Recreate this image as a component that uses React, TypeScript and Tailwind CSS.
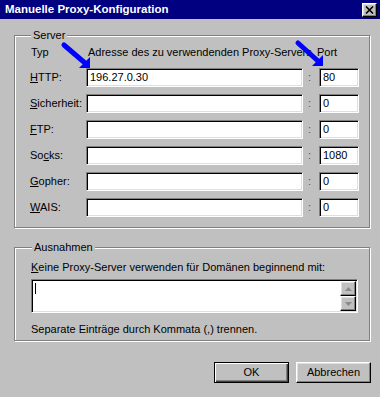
import React from "react";

const sunken =
  "border border-t-[#808080] border-l-[#808080] border-r-white border-b-white shadow-[inset_1px_1px_0_#000,inset_-1px_-1px_0_#dfdfdf] bg-white";
const raised =
  "border border-t-white border-l-white border-r-black border-b-black shadow-[inset_-1px_-1px_0_#808080,inset_1px_1px_0_#dfdfdf] bg-[#c0c0c0]";
const groupBox =
  "border border-[#808080] shadow-[1px_1px_0_#fff,inset_1px_1px_0_#fff]";

type Row = { pre: string; key: string; post: string; host: string; port: string };

const rows: Row[] = [
  { pre: "", key: "H", post: "TTP:", host: "196.27.0.30", port: "80" },
  { pre: "", key: "S", post: "icherheit:", host: "", port: "0" },
  { pre: "", key: "F", post: "TP:", host: "", port: "0" },
  { pre: "So", key: "c", post: "ks:", host: "", port: "1080" },
  { pre: "", key: "G", post: "opher:", host: "", port: "0" },
  { pre: "", key: "W", post: "AIS:", host: "", port: "0" },
];

function Field({ value, className }: { value: string; className: string }) {
  return (
    <div className={`${sunken} ${className} h-[19px] flex items-center pl-[3px] text-black`}>
      {value}
    </div>
  );
}

function Arrow({ x1, y1, tx, ty }: { x1: number; y1: number; tx: number; ty: number }) {
  return (
    <g>
      <line x1={x1} y1={y1} x2={tx - 5} y2={ty - 5} stroke="#0000ff" strokeWidth={5} strokeLinecap="round" />
      <polygon points={`${tx},${ty - 11} ${tx},${ty} ${tx - 11},${ty}`} fill="#0000ff" />
    </g>
  );
}

export default function App() {
  return (
    <div
      className="relative w-[380px] h-[397px] bg-[#c0c0c0] overflow-hidden text-[11px] leading-[13px] text-black"
      style={{ fontFamily: '"Liberation Sans", Arial, sans-serif' }}
    >
      {/* title bar */}
      <div className="h-[19px] bg-[#000080] flex items-center justify-between pl-[5px] pr-[3px]">
        <span className="text-white font-bold text-[11.5px]">Manuelle Proxy-Konfiguration</span>
        <div className={`${raised} w-[15px] h-[14px] flex items-center justify-center`}>
          <svg width="9" height="8" viewBox="0 0 9 8">
            <path d="M1 0.5 L8 7.5 M8 0.5 L1 7.5" stroke="#000" strokeWidth="1.6" />
          </svg>
        </div>
      </div>

      {/* Server */}
      <fieldset className={`${groupBox} ml-[14px] mt-[10px] w-[356px] pl-[15px] pt-[4px] pb-[10px]`}>
        <legend className="ml-[1px] px-[2px] bg-[#c0c0c0]">Server</legend>
        <div className="grid grid-cols-[56px_217px_16px_40px] items-center">
          <span className="pl-[1px]">Typ</span>
          <span className="pl-[2px] whitespace-nowrap">Adresse des zu verwendenden Proxy-Servers</span>
          <span />
          <span className="-ml-[2px]">Port</span>
        </div>
        <div className="mt-[9px] grid grid-cols-[56px_217px_16px_40px] gap-y-[7px] items-center">
          {rows.map((r) => (
            <React.Fragment key={r.post}>
              <span>
                {r.pre}
                <span className="underline">{r.key}</span>
                {r.post}
              </span>
              <Field value={r.host} className="w-[217px]" />
              <span className="text-center pr-[3px] text-[#555]">:</span>
              <Field value={r.port} className="w-[40px]" />
            </React.Fragment>
          ))}
        </div>
      </fieldset>

      {/* Ausnahmen */}
      <fieldset className={`${groupBox} ml-[14px] mt-[13px] w-[356px] pl-[16px] pt-[7px] pb-[4px]`}>
        <legend className="ml-[1px] px-[2px] bg-[#c0c0c0]">Ausnahmen</legend>
        <div>
          <span className="underline">K</span>eine Proxy-Server verwenden für Domänen beginnend mit:
        </div>
        <div className={`${sunken} mt-[5px] w-[327px] h-[34px] flex`}>
          <div className="flex-1 pl-[3px] pt-[3px]">
            <div className="w-[1px] h-[11px] bg-black" />
          </div>
          <div className="w-[16px] flex flex-col mr-[1px] my-[1px]">
            <div className={`${raised} flex-1 flex items-center justify-center`}>
              <svg width="7" height="4" viewBox="0 0 7 4">
                <path d="M3.5 0 L7 4 L0 4 Z" fill="#8a8a8a" />
              </svg>
            </div>
            <div className={`${raised} flex-1 flex items-center justify-center`}>
              <svg width="7" height="4" viewBox="0 0 7 4">
                <path d="M0 0 L7 0 L3.5 4 Z" fill="#8a8a8a" />
              </svg>
            </div>
          </div>
        </div>
        <div className="mt-[10px]">Separate Einträge durch Kommata (,) trennen.</div>
      </fieldset>

      {/* buttons */}
      <div className="mt-[21px] flex justify-end gap-[7px] pr-[9px]">
        <button className="w-[75px] h-[21px] border border-black bg-[#c0c0c0] shadow-[inset_1px_1px_0_#fff,inset_-1px_-1px_0_#404040,inset_-2px_-2px_0_#808080] text-black">
          OK
        </button>
        <button className={`${raised} w-[75px] h-[21px] text-black`}>Abbrechen</button>
      </div>

      {/* annotation arrows */}
      <svg className="absolute inset-0 pointer-events-none" width="380" height="397">
        <Arrow x1={64} y1={45} tx={90} ty={68} />
        <Arrow x1={298} y1={43} tx={323} ty={66} />
      </svg>
    </div>
  );
}
